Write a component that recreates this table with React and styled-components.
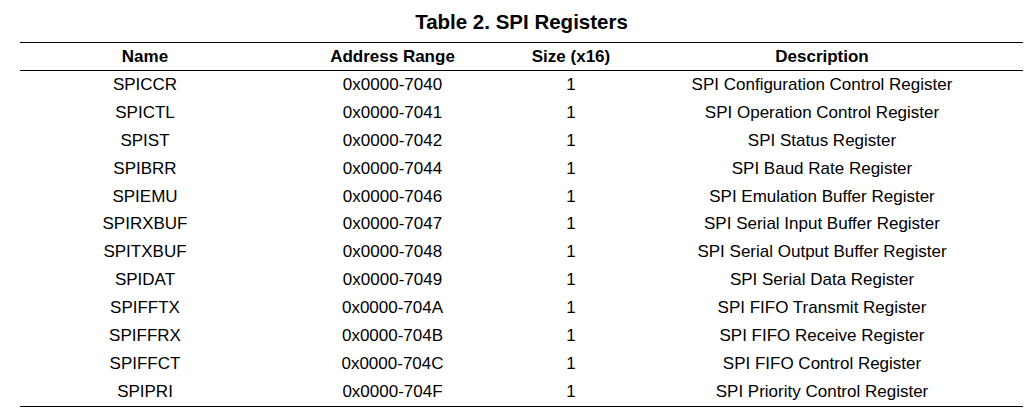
import styled, { createGlobalStyle } from "styled-components";

const registers = [
  ["SPICCR", "0x0000-7040", "1", "SPI Configuration Control Register"],
  ["SPICTL", "0x0000-7041", "1", "SPI Operation Control Register"],
  ["SPIST", "0x0000-7042", "1", "SPI Status Register"],
  ["SPIBRR", "0x0000-7044", "1", "SPI Baud Rate Register"],
  ["SPIEMU", "0x0000-7046", "1", "SPI Emulation Buffer Register"],
  ["SPIRXBUF", "0x0000-7047", "1", "SPI Serial Input Buffer Register"],
  ["SPITXBUF", "0x0000-7048", "1", "SPI Serial Output Buffer Register"],
  ["SPIDAT", "0x0000-7049", "1", "SPI Serial Data Register"],
  ["SPIFFTX", "0x0000-704A", "1", "SPI FIFO Transmit Register"],
  ["SPIFFRX", "0x0000-704B", "1", "SPI FIFO Receive Register"],
  ["SPIFFCT", "0x0000-704C", "1", "SPI FIFO Control Register"],
  ["SPIPRI", "0x0000-704F", "1", "SPI Priority Control Register"],
];

const headers = ["Name", "Address Range", "Size (x16)", "Description"];

const App = () => {
  return (
    <>
      <GlobalStyle />
      <Page>
        <Title>Table 2. SPI Registers</Title>
        <Table>
          <Row $head>
            {headers.map((h) => (
              <Cell key={h} $bold>{h}</Cell>
            ))}
          </Row>
          {registers.map((r) => (
            <Row key={r[0]}>
              {r.map((v, i) => (
                <Cell key={i}>{v}</Cell>
              ))}
            </Row>
          ))}
        </Table>
      </Page>
    </>
  );
};

export default App;

const GlobalStyle = createGlobalStyle`
  body {
    margin: 0;
    background: #ffffff;
    font-family: "Liberation Sans", Arial, sans-serif;
    color: #000000;
  }
`;

const Page = styled.div`
  width: 1003px;
  padding: 0 5px 0 20px;
`;

const Title = styled.h1`
  margin: 0;
  height: 42px;
  display: flex;
  align-items: center;
  justify-content: center;
  padding-top: 1px;
  box-sizing: border-box;
  font-size: 20.5px;
  font-weight: bold;
`;

const Table = styled.div`
  border-top: 1px solid #000;
  border-bottom: 1px solid #000;
`;

const Row = styled.div`
  display: grid;
  grid-template-columns: 250px 245px 112px 390px;
  height: ${(p) => (p.$head ? "27px" : "27.9px")};
  border-bottom: ${(p) => (p.$head ? "1px solid #000" : "none")};
  align-items: center;
`;

const Cell = styled.div`
  text-align: center;
  font-size: 17px;
  font-weight: ${(p) => (p.$bold ? "bold" : "normal")};
  white-space: nowrap;
`;
